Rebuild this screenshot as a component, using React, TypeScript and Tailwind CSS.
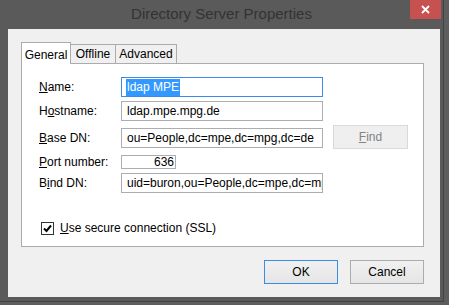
const font = { fontFamily: '"Liberation Sans", Arial, sans-serif' };

function Field({ label, k, rest, children }: { label: string; k: number; rest?: string; children: React.ReactNode }) {
  // k = index of the access-key letter to underline
  return (
    <div className="flex items-center">
      <div className="w-[82px] text-[12px] text-black leading-none">
        {label.slice(0, k)}
        <u className="underline-offset-[1px]">{label[k]}</u>
        {label.slice(k + 1)}
      </div>
      {children}
      {rest}
    </div>
  );
}

function TextBox({ value, className = "" }: { value: string; className?: string }) {
  return (
    <div
      className={
        "h-[20px] w-[202px] border border-[#abadb3] bg-white pl-[5px] text-[12px] leading-[18px] text-black whitespace-nowrap overflow-hidden " +
        className
      }
    >
      {value}
    </div>
  );
}

function Button({ children, primary = false }: { children: React.ReactNode; primary?: boolean }) {
  return (
    <div
      className={
        "flex h-[24px] w-[74px] items-center justify-center border bg-gradient-to-b from-[#f0f0f0] to-[#e5e5e5] text-[12px] text-black " +
        (primary ? "border-[#3c8ce6]" : "border-[#acacac]")
      }
    >
      {children}
    </div>
  );
}

export default function App() {
  return (
    <div className="h-[305px] w-[449px] overflow-hidden bg-[#5e5e5e]" style={font}>
      <div className="flex h-[302px] w-[444px] flex-col border-r border-b border-[#434343] bg-[#5a5a5a]">
        {/* title bar */}
        <div className="grid h-[29px] grid-cols-[1fr_auto_1fr]">
          <div />
          <div className="pt-[5px] text-[15px] leading-[17px] text-[#333333]">Directory Server Properties</div>
          <div className="flex justify-end">
            <div className="mr-[2px] flex h-[19px] w-[31px] items-center justify-center bg-[#c75050]">
              <svg width="9" height="9" viewBox="0 0 9 9">
                <path d="M1 1 L8 8 M8 1 L1 8" stroke="white" strokeWidth="1.8" />
              </svg>
            </div>
          </div>
        </div>

        {/* client */}
        <div className="ml-[8px] flex h-[268px] w-[432px] flex-col bg-[#f0f0f0] pt-[13px] pl-[13px]">
          {/* tabs */}
          <div className="flex items-end text-[12px] text-black">
            <div className="relative z-10 -mb-px flex h-[22px] w-[50px] items-start justify-center border-x border-t border-[#acacac] bg-white pt-[3px]">
              General
            </div>
            <div className="flex h-[19px] w-[45px] items-center justify-center border-t border-r border-[#acacac] bg-[#f0f0f0]">
              Offline
            </div>
            <div className="flex h-[19px] w-[61px] items-center justify-center border-t border-r border-[#acacac] bg-[#f0f0f0]">
              Advanced
            </div>
          </div>

          {/* panel */}
          <div className="flex h-[184px] w-[403px] flex-col border border-[#acacac] bg-white pt-[13px] pl-[17px]">
            <Field label="Name:" k={0}>
              <div className="flex h-[20px] w-[202px] items-center border border-[#3c8ce6] bg-white pl-[4px] text-[12px] whitespace-nowrap">
                <span className="flex h-[17px] items-center bg-[#3399ff] px-[1px] text-white">ldap MPE</span>
              </div>
            </Field>
            <div className="mt-[4px]">
              <Field label="Hostname:" k={1}>
                <TextBox value="ldap.mpe.mpg.de" />
              </Field>
            </div>
            <div className="mt-[7px] flex h-[20px] items-start">
              <Field label="Base DN:" k={0}>
                <TextBox value="ou=People,dc=mpe,dc=mpg,dc=de" />
              </Field>
              <div className="ml-[10px] -mt-[3px] flex h-[24px] w-[75px] shrink-0 items-center justify-center border border-[#d9d9d9] bg-[#efefef] text-[12px] text-[#838383]">
                <u>F</u>ind
              </div>
            </div>
            <div className="mt-[7px]">
              <Field label="Port number:" k={0}>
                <div className="h-[14px] w-[55px] border border-[#abadb3] bg-white pr-[1px] text-right text-[12px] leading-[12px] text-black">
                  636
                </div>
              </Field>
            </div>
            <div className="mt-[4px]">
              <Field label="Bind DN:" k={1}>
                <TextBox value="uid=buron,ou=People,dc=mpe,dc=mpg,dc=de" />
              </Field>
            </div>
            <div className="mt-[26px] flex items-center pl-[2px]">
              <div className="flex h-[13px] w-[13px] items-center justify-center border border-[#333333] bg-white">
                <svg width="9" height="9" viewBox="0 0 9 9">
                  <path d="M1 4.5 L3.5 7 L8 1.5" fill="none" stroke="black" strokeWidth="2" />
                </svg>
              </div>
              <div className="ml-[6px] text-[12px] text-black">
                <u>U</u>se secure connection (SSL)
              </div>
            </div>
          </div>

          {/* buttons */}
          <div className="mt-[13px] flex justify-end gap-[12px] pr-[16px]">
            <Button primary>OK</Button>
            <Button>Cancel</Button>
          </div>
        </div>
      </div>
    </div>
  );
}
